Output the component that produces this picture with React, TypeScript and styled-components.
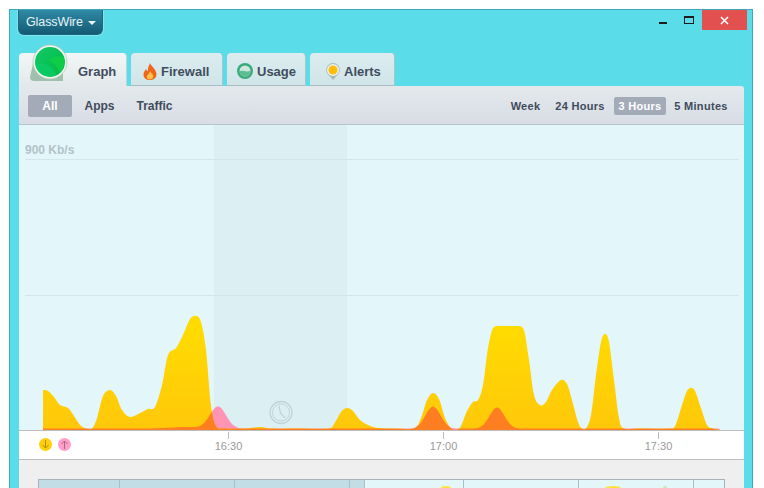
import React from 'react';
import styled, { createGlobalStyle } from 'styled-components';

const GlobalStyle = createGlobalStyle`
  html, body {
    margin: 0;
    height: 100%;
    background: #fff;
    overflow: hidden;
    font-family: "Liberation Sans", Arial, sans-serif;
  }
`;

const Page = styled.div`
  height: 488px;
  padding: 9px 11px 0 9px;
  box-sizing: border-box;
  overflow: hidden;
`;

const Window = styled.div`
  height: 479px;
  box-sizing: border-box;
  display: flex;
  flex-direction: column;
  background: #5adce9;
  border: 1px solid #3fa9b8;
  border-bottom: none;
  overflow: hidden;
`;

const TitleBar = styled.div`
  height: 43px;
  flex: none;
  display: flex;
  justify-content: space-between;
  align-items: flex-start;
  padding: 0 5px 0 8px;
`;

const AppMenu = styled.button`
  width: 85px;
  height: 25px;
  padding: 0 0 1px 7px;
  display: flex;
  align-items: center;
  gap: 5px;
  border: 1px solid #1b6780;
  border-top: none;
  border-radius: 0 0 6px 6px;
  background: linear-gradient(#2f8aa5, #155a74);
  box-shadow: 0 0 0 1px rgba(255, 255, 255, 0.25);
  color: #e8f4f7;
  font: 12.5px "Liberation Sans", Arial, sans-serif;
  letter-spacing: -0.1px;
  box-sizing: border-box;
`;

const Caret = styled.span`
  width: 0;
  height: 0;
  border-style: solid;
  border-width: 4px 4px 0 4px;
  border-color: #e8f4f7 transparent transparent transparent;
  margin-top: 2px;
`;

const WindowControls = styled.div`
  display: flex;
  align-items: flex-start;
`;

const ControlButton = styled.div`
  width: 26px;
  height: 20px;
  display: flex;
  align-items: center;
  justify-content: center;
`;

const MinimizeGlyph = styled.span`
  width: 8px;
  height: 2px;
  margin-top: 5px;
  background: #1c1c1c;
`;

const MaximizeGlyph = styled.span`
  width: 8px;
  height: 5px;
  margin-top: -1px;
  border: 1px solid #1c1c1c;
  border-top-width: 2px;
`;

const CloseButton = styled.div`
  width: 45px;
  height: 20px;
  display: flex;
  align-items: center;
  justify-content: center;
  background: #e25050;
`;

const TabRow = styled.div`
  height: 33px;
  flex: none;
  display: flex;
  gap: 4px;
  padding-left: 9px;
`;

const Tab = styled.div<{ $active?: boolean; $width: number; $indent: number }>`
  position: relative;
  width: ${p => p.$width}px;
  box-sizing: border-box;
  padding: 3px 0 0 ${p => p.$indent}px;
  display: flex;
  align-items: center;
  gap: 4px;
  border-radius: 4px 4px 0 0;
  border-right: 1px solid ${p => (p.$active ? '#c3d4d9' : '#a9c4cb')};
  background: ${p => (p.$active ? 'linear-gradient(#f2f6f6, #e3e9eb)' : 'linear-gradient(#dcecef, #d0e5e9)')};
  box-shadow: ${p => (p.$active ? 'none' : 'inset 0 -1px 0 #a9bcc2')};
  color: #414d5e;
  font-size: 13px;
  font-weight: bold;
`;

const LogoBadge = styled.svg`
  position: absolute;
  left: 8px;
  top: -10px;
`;

const Panel = styled.div`
  flex: 1;
  min-height: 0;
  margin: 0 8px 0 9px;
  display: flex;
  flex-direction: column;
  border-radius: 0 3px 0 0;
  overflow: hidden;
`;

const Toolbar = styled.div`
  height: 39px;
  flex: none;
  box-sizing: border-box;
  display: flex;
  justify-content: space-between;
  align-items: center;
  padding: 2px 8px 0 9px;
  background: linear-gradient(#e3e9eb, #d8dde6);
  border-bottom: 1px solid #b5c3ca;
`;

const FilterGroup = styled.div`
  display: flex;
  align-items: center;
`;

const FilterButton = styled.div<{ $active?: boolean; $width: number }>`
  width: ${p => p.$width}px;
  height: 22px;
  display: flex;
  align-items: center;
  justify-content: center;
  border-radius: 2px;
  background: ${p => (p.$active ? '#a3abb9' : 'transparent')};
  color: ${p => (p.$active ? '#fff' : '#3f4b5c')};
  font-size: 12px;
  font-weight: bold;
`;

const RangeGroup = styled.div`
  display: flex;
  align-items: center;
`;

const RangeButton = styled.div<{ $active?: boolean; $width: number }>`
  width: ${p => p.$width}px;
  height: 18px;
  display: flex;
  align-items: center;
  justify-content: center;
  border-radius: 2px;
  background: ${p => (p.$active ? '#a3abb9' : 'transparent')};
  color: ${p => (p.$active ? '#fff' : '#3f4b5c')};
  font-size: 11px;
  font-weight: bold;
  letter-spacing: 0.3px;
  white-space: nowrap;
`;

const ChartArea = styled.div`
  position: relative;
  height: 305px;
  flex: none;
  background: #e3f6f9;
`;

const ChartSvg = styled.svg`
  display: block;
`;

const ScaleLabel = styled.span`
  position: absolute;
  left: 6px;
  top: 18px;
  color: #b3c3c8;
  font-size: 12px;
  font-weight: bold;
`;

const TimeAxis = styled.div`
  position: relative;
  height: 30px;
  flex: none;
  box-sizing: border-box;
  display: flex;
  align-items: center;
  gap: 6px;
  padding: 0 0 2px 20px;
  background: #fff;
  border-top: 1px solid #bdbdbd;
  border-bottom: 1px solid #bdbdbd;
`;

const LegendDot = styled.span<{ $color: string }>`
  width: 13px;
  height: 13px;
  display: flex;
  align-items: center;
  justify-content: center;
  border-radius: 50%;
  background: ${p => p.$color};
`;

const TimeTick = styled.div<{ $left: number }>`
  position: absolute;
  left: ${p => p.$left}px;
  top: 1px;
  width: 41px;
  margin-left: -20px;
  display: flex;
  flex-direction: column;
  align-items: center;
  color: #9a9a9a;
  font-size: 11px;
  line-height: 14px;
  &::before {
    content: '';
    width: 1px;
    height: 7px;
    background: #bdbdbd;
  }
`;

const Footer = styled.div`
  flex: 1;
  background: #efefef;
  padding: 19px 19px 0;
`;

const MiniChart = styled.div`
  height: 20px;
  position: relative;
  display: flex;
  border: 1px solid #a7b3ba;
  border-bottom: none;
  background: #e3f6f9;
`;

const MiniSegment = styled.div<{ $width: number; $past?: boolean }>`
  width: ${p => p.$width}px;
  flex: none;
  box-sizing: border-box;
  border-right: 1px solid #a9c0ca;
  background: ${p => (p.$past ? '#c2dde6' : 'transparent')};
`;

const MiniPeak = styled.span<{ $left: number; $width: number; $color: string }>`
  position: absolute;
  left: ${p => p.$left}px;
  top: 6px;
  width: ${p => p.$width}px;
  height: 4px;
  border-radius: 50% 50% 0 0;
  background: ${p => p.$color};
`;

type Pt = [number, number];

// the graph clips at its scale between 490 and 525, so nothing may rise above 326 there
const clampY = (y: number, x: number) => Math.max(x > 480 && x < 530 ? 326 : 300, Math.min(y, 430));

// Catmull-Rom through the sampled points, good enough for the soft traffic curves
const smooth = (pts: Pt[]) => {
  let d = `M${pts[0][0]} ${pts[0][1]}`;
  for (let i = 0; i < pts.length - 1; i++) {
    const p0 = pts[Math.max(i - 1, 0)];
    const p1 = pts[i];
    const p2 = pts[i + 1];
    const p3 = pts[Math.min(i + 2, pts.length - 1)];
    const c1x = p1[0] + (p2[0] - p0[0]) / 6;
    const c1y = clampY(p1[1] + (p2[1] - p0[1]) / 6, c1x);
    const c2x = p2[0] - (p3[0] - p1[0]) / 6;
    const c2y = clampY(p2[1] - (p3[1] - p1[1]) / 6, c2x);
    d += ` C${c1x.toFixed(1)} ${c1y.toFixed(1)} ${c2x.toFixed(1)} ${c2y.toFixed(1)} ${p2[0]} ${p2[1]}`;
  }
  return d + ' L720 430 L43 430 Z';
};

const download: Pt[] = [
  [43, 390], [48, 391], [54, 397], [60, 405], [68, 408], [74, 416], [80, 425], [86, 428.5], [92, 428.5],
  [97, 418], [103, 396], [110, 390], [116, 396], [122, 410], [130, 417], [140, 413], [148, 409], [155, 407],
  [162, 385], [168, 355], [176, 348], [183, 335], [190, 319], [196, 316], [201, 322], [206, 350], [211, 405],
  [216, 426], [225, 428.5], [245, 428.5], [260, 427], [272, 428.5], [300, 428.5], [328, 428.5], [334, 424], [341, 412],
  [347, 408], [353, 411], [360, 420], [368, 425], [378, 428], [395, 428.5], [414, 428.5], [421, 418], [427, 400],
  [433, 393], [439, 399], [445, 418], [451, 428.5], [456, 430], [461, 426], [467, 411], [473, 402], [478, 400],
  [483, 385], [488, 348], [493, 328], [498, 326], [508, 326], [519, 326], [524, 330], [529, 360], [534, 395],
  [540, 405], [546, 402], [552, 390], [561, 380], [567, 384], [572, 400], [578, 422], [582, 428.5], [586, 428.5],
  [591, 415], [596, 375], [601, 342], [605, 334], [609, 342], [614, 380], [619, 418], [624, 428.5], [640, 428.5],
  [668, 428.5], [675, 426], [682, 405], [687, 391], [691, 388], [695, 391], [701, 408], [707, 425], [713, 428.5],
  [720, 430],
];

// upload is a low floor with a few bell shaped bursts
const bursts = [
  { x: 218, h: 22, s: 8 },
  { x: 433, h: 22, s: 7.5 },
  { x: 497, h: 21, s: 7.5 },
  { x: 185, h: 1.5, s: 16 },
];

const upload: Pt[] = [];
for (let x = 43; x <= 720; x += 2) {
  const lift = bursts.reduce((sum, b) => sum + b.h * Math.exp(-((x - b.x) ** 2) / (2 * b.s ** 2)), 0);
  upload.push([x, +(428.6 - lift).toFixed(1)]);
}

const downloadPath = smooth(download);
const uploadPath = smooth(upload);

const TrafficChart = () => (
  <ChartSvg width="726" height="305" viewBox="19 125 726 305">
    <defs>
      <linearGradient id="down" x1="0" y1="326" x2="0" y2="430" gradientUnits="userSpaceOnUse">
        <stop offset="0" stopColor="#ffdb00" />
        <stop offset="1" stopColor="#ffc80a" />
      </linearGradient>
      <clipPath id="downClip">
        <path d={downloadPath} />
      </clipPath>
    </defs>
    <rect x="214" y="125" width="133" height="305" fill="#dcf0f4" />
    <rect x="25" y="159" width="714" height="1" fill="#d3e6ea" />
    <rect x="25" y="295" width="714" height="1" fill="#d3e6ea" />
    <path d={uploadPath} fill="#ff94b4" />
    <path d={downloadPath} fill="url(#down)" />
    <path d={uploadPath} fill="#ff7e22" clipPath="url(#downClip)" />
    <g fill="none" stroke="#c3d2d6">
      <circle cx="281" cy="412.5" r="11" strokeWidth="1.3" />
      <circle cx="281" cy="412.5" r="8.5" strokeWidth="1" />
      <path d="M279 406 L280.5 413 L285 418" strokeWidth="1.3" />
    </g>
  </ChartSvg>
);

const Logo = () => (
  <LogoBadge width="60" height="44" viewBox="0 0 60 44">
    <defs>
      <linearGradient id="logoGreen" x1="0" y1="0" x2="1" y2="1">
        <stop offset="0" stopColor="#12c967" />
        <stop offset="1" stopColor="#00ba42" />
      </linearGradient>
    </defs>
    <path d="M9 8 L3 34 Q3 38 7 38 L36 38 L36 20 Z" fill="#a0c0ad" />
    <circle cx="23" cy="19" r="17" fill="#f2f7f3" stroke="#a9c4b3" strokeWidth="0.7" />
    <circle cx="23" cy="19" r="15" fill="url(#logoGreen)" />
    <path d="M8.5 22 C15 17 26 24 30 32.2 C24 35.5 11 33 8.5 22 Z" fill="#0ed073" opacity="0.55" />
    <path d="M22 17 C28 13 34 12 37 15 C38.5 20 36.5 26 33 29 C30 24 27 20 22 17 Z" fill="#16d53f" opacity="0.6" />
  </LogoBadge>
);

const FlameIcon = () => (
  <svg width="14" height="17" viewBox="0 0 14 17">
    <path d="M7 0 C8 3 13 6 13.5 11 C13.5 15 10.5 17 7 17 C3 17 0.5 15 0.5 11.5 C0.5 9 2 7.5 3 6 C3.5 7.5 4 8 4.8 8.3 C4.5 5 6 2.5 7 0 Z" fill="#f2661c" />
    <path d="M7.2 8 C8 10 10.5 11.5 10.3 13.8 C10 15.8 8.5 16.5 7 16.5 C5 16.5 3.6 15.4 3.8 13.5 C4 12 6.5 10.5 7.2 8 Z" fill="#ffc24a" />
  </svg>
);

const UsageIcon = () => (
  <svg width="16" height="16" viewBox="0 0 16 16">
    <circle cx="8" cy="8" r="8" fill="#3aab7b" />
    <circle cx="8" cy="8" r="5.5" fill="#cfe6dc" />
    <path d="M2.5 8.5 C5 6.5 7.5 9.5 13.5 8 C13 11.5 10.5 13.5 8 13.5 C5 13.5 3 11.5 2.5 8.5 Z" fill="#5dbd93" />
  </svg>
);

const AlertIcon = () => (
  <svg width="14" height="17" viewBox="0 0 14 17">
    <path d="M7 17 L2 11.5 A6.8 6.8 0 1 1 12 11.5 Z" fill="#a9b9bb" />
    <circle cx="7" cy="7" r="6" fill="#eef3ea" />
    <circle cx="7" cy="7" r="4.5" fill="#ffbe0b" />
  </svg>
);

const ArrowGlyph = ({ up, color }: { up?: boolean; color: string }) => (
  <svg width="9" height="9" viewBox="0 0 9 9" fill="none" stroke={color} strokeWidth="1">
    {up ? <path d="M4.5 9 V1 M1.5 4 L4.5 1 L7.5 4" /> : <path d="M4.5 0 V8 M1.5 5 L4.5 8 L7.5 5" />}
  </svg>
);

export default function App() {
  return (
    <>
      <GlobalStyle />
      <Page>
        <Window>
          <TitleBar>
            <AppMenu>
              GlassWire
              <Caret />
            </AppMenu>
            <WindowControls>
              <ControlButton><MinimizeGlyph /></ControlButton>
              <ControlButton><MaximizeGlyph /></ControlButton>
              <CloseButton>
                <svg width="9" height="9" viewBox="0 0 9 9" stroke="#fff" strokeWidth="1.5">
                  <path d="M1 1 L8 8 M8 1 L1 8" />
                </svg>
              </CloseButton>
            </WindowControls>
          </TitleBar>
          <TabRow>
            <Tab $active $width={108} $indent={59}>
              <Logo />
              Graph
            </Tab>
            <Tab $width={92} $indent={12}><FlameIcon />Firewall</Tab>
            <Tab $width={79} $indent={10}><UsageIcon />Usage</Tab>
            <Tab $width={85} $indent={16}><AlertIcon />Alerts</Tab>
          </TabRow>
          <Panel>
            <Toolbar>
              <FilterGroup>
                <FilterButton $active $width={44}>All</FilterButton>
                <FilterButton $width={55}>Apps</FilterButton>
                <FilterButton $width={55}>Traffic</FilterButton>
              </FilterGroup>
              <RangeGroup>
                <RangeButton $width={41}>Week</RangeButton>
                <RangeButton $width={68}>24 Hours</RangeButton>
                <RangeButton $active $width={52}>3 Hours</RangeButton>
                <RangeButton $width={70}>5 Minutes</RangeButton>
              </RangeGroup>
            </Toolbar>
            <ChartArea>
              <TrafficChart />
              <ScaleLabel>900 Kb/s</ScaleLabel>
            </ChartArea>
            <TimeAxis>
              <LegendDot $color="#ffcf0a"><ArrowGlyph color="#b08d10" /></LegendDot>
              <LegendDot $color="#ff9ec8"><ArrowGlyph up color="#a8688a" /></LegendDot>
              <TimeTick $left={209}>16:30</TimeTick>
              <TimeTick $left={424}>17:00</TimeTick>
              <TimeTick $left={639}>17:30</TimeTick>
            </TimeAxis>
            <Footer>
              <MiniChart>
                <MiniSegment $past $width={81} />
                <MiniSegment $past $width={115} />
                <MiniSegment $past $width={115} />
                <MiniSegment $past $width={15} />
                <MiniSegment $width={99} />
                <MiniSegment $width={115} />
                <MiniSegment $width={115} />
                <MiniPeak $left={402} $width={10} $color="#ffe23a" />
                <MiniPeak $left={566} $width={16} $color="#ffe23a" />
                <MiniPeak $left={624} $width={4} $color="#cfe3b4" />
              </MiniChart>
            </Footer>
          </Panel>
        </Window>
      </Page>
    </>
  );
}
